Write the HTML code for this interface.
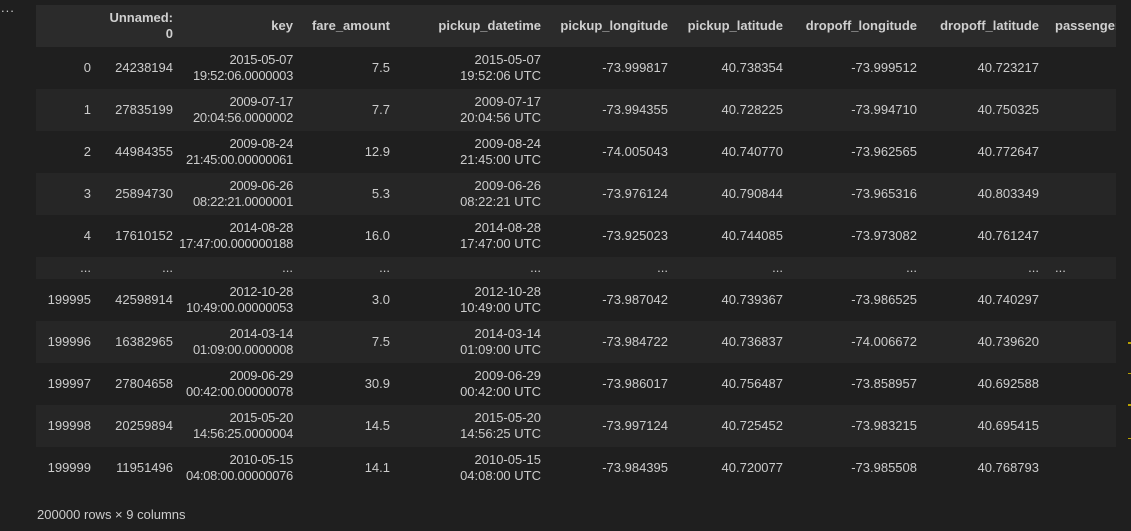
<!DOCTYPE html>
<html><head><style>
body{margin:0;background:#1f1f1f;width:1131px;height:531px;overflow:hidden;font-family:"Liberation Sans",sans-serif;color:#cccccc;font-size:13px;position:relative}
.dots{position:absolute;left:1px;top:0px;color:#ccc;font-size:13px;letter-spacing:1px}
table{position:absolute;left:36px;top:5px;border-collapse:collapse;table-layout:fixed;width:1080px}
td,th{padding:0;text-align:right;white-space:nowrap;overflow:hidden;line-height:16px}
th{font-weight:bold;height:42px;background:#2b2b2b;color:#cfcfcf}
tr.r td{height:42px}
tr.l td{background:#262626}
tr.e td{height:22px;background:#262626}
td.p,th.p{text-align:left;padding-left:16px}
.k{letter-spacing:-0.3px}
.foot{position:absolute;left:37px;top:507px;font-size:13px}
.m{position:absolute;left:1128px;width:3px;height:2px;background:#b8a000}
</style></head><body>
<div class="dots">...</div>
<table>
<colgroup><col style="width:55px"><col style="width:82px"><col style="width:120px"><col style="width:97px"><col style="width:151px"><col style="width:127px"><col style="width:115px"><col style="width:134px"><col style="width:122px"><col style="width:77px"></colgroup>
<tr><th></th><th>Unnamed:<br>0</th><th>key</th><th>fare_amount</th><th>pickup_datetime</th><th>pickup_longitude</th><th>pickup_latitude</th><th>dropoff_longitude</th><th>dropoff_latitude</th><th class="p">passenger_count</th></tr>
<tr class="r"><td>0</td><td>24238194</td><td class="k">2015-05-07<br>19:52:06.0000003</td><td>7.5</td><td>2015-05-07<br>19:52:06 UTC</td><td>-73.999817</td><td>40.738354</td><td>-73.999512</td><td>40.723217</td><td class="p"></td></tr>
<tr class="r l"><td>1</td><td>27835199</td><td class="k">2009-07-17<br>20:04:56.0000002</td><td>7.7</td><td>2009-07-17<br>20:04:56 UTC</td><td>-73.994355</td><td>40.728225</td><td>-73.994710</td><td>40.750325</td><td class="p"></td></tr>
<tr class="r"><td>2</td><td>44984355</td><td class="k">2009-08-24<br>21:45:00.00000061</td><td>12.9</td><td>2009-08-24<br>21:45:00 UTC</td><td>-74.005043</td><td>40.740770</td><td>-73.962565</td><td>40.772647</td><td class="p"></td></tr>
<tr class="r l"><td>3</td><td>25894730</td><td class="k">2009-06-26<br>08:22:21.0000001</td><td>5.3</td><td>2009-06-26<br>08:22:21 UTC</td><td>-73.976124</td><td>40.790844</td><td>-73.965316</td><td>40.803349</td><td class="p"></td></tr>
<tr class="r"><td>4</td><td>17610152</td><td class="k">2014-08-28<br>17:47:00.000000188</td><td>16.0</td><td>2014-08-28<br>17:47:00 UTC</td><td>-73.925023</td><td>40.744085</td><td>-73.973082</td><td>40.761247</td><td class="p"></td></tr>
<tr class="e"><td>...</td><td>...</td><td>...</td><td>...</td><td>...</td><td>...</td><td>...</td><td>...</td><td>...</td><td class="p">...</td></tr>
<tr class="r"><td>199995</td><td>42598914</td><td class="k">2012-10-28<br>10:49:00.00000053</td><td>3.0</td><td>2012-10-28<br>10:49:00 UTC</td><td>-73.987042</td><td>40.739367</td><td>-73.986525</td><td>40.740297</td><td class="p"></td></tr>
<tr class="r l"><td>199996</td><td>16382965</td><td class="k">2014-03-14<br>01:09:00.0000008</td><td>7.5</td><td>2014-03-14<br>01:09:00 UTC</td><td>-73.984722</td><td>40.736837</td><td>-74.006672</td><td>40.739620</td><td class="p"></td></tr>
<tr class="r"><td>199997</td><td>27804658</td><td class="k">2009-06-29<br>00:42:00.00000078</td><td>30.9</td><td>2009-06-29<br>00:42:00 UTC</td><td>-73.986017</td><td>40.756487</td><td>-73.858957</td><td>40.692588</td><td class="p"></td></tr>
<tr class="r l"><td>199998</td><td>20259894</td><td class="k">2015-05-20<br>14:56:25.0000004</td><td>14.5</td><td>2015-05-20<br>14:56:25 UTC</td><td>-73.997124</td><td>40.725452</td><td>-73.983215</td><td>40.695415</td><td class="p"></td></tr>
<tr class="r"><td>199999</td><td>11951496</td><td class="k">2010-05-15<br>04:08:00.00000076</td><td>14.1</td><td>2010-05-15<br>04:08:00 UTC</td><td>-73.984395</td><td>40.720077</td><td>-73.985508</td><td>40.768793</td><td class="p"></td></tr>
</table>
<div class="foot">200000 rows × 9 columns</div>
<div class="m" style="top:342px"></div><div class="m" style="top:373px;height:1px"></div><div class="m" style="top:404px"></div><div class="m" style="top:438px;height:1px"></div>
</body></html>
